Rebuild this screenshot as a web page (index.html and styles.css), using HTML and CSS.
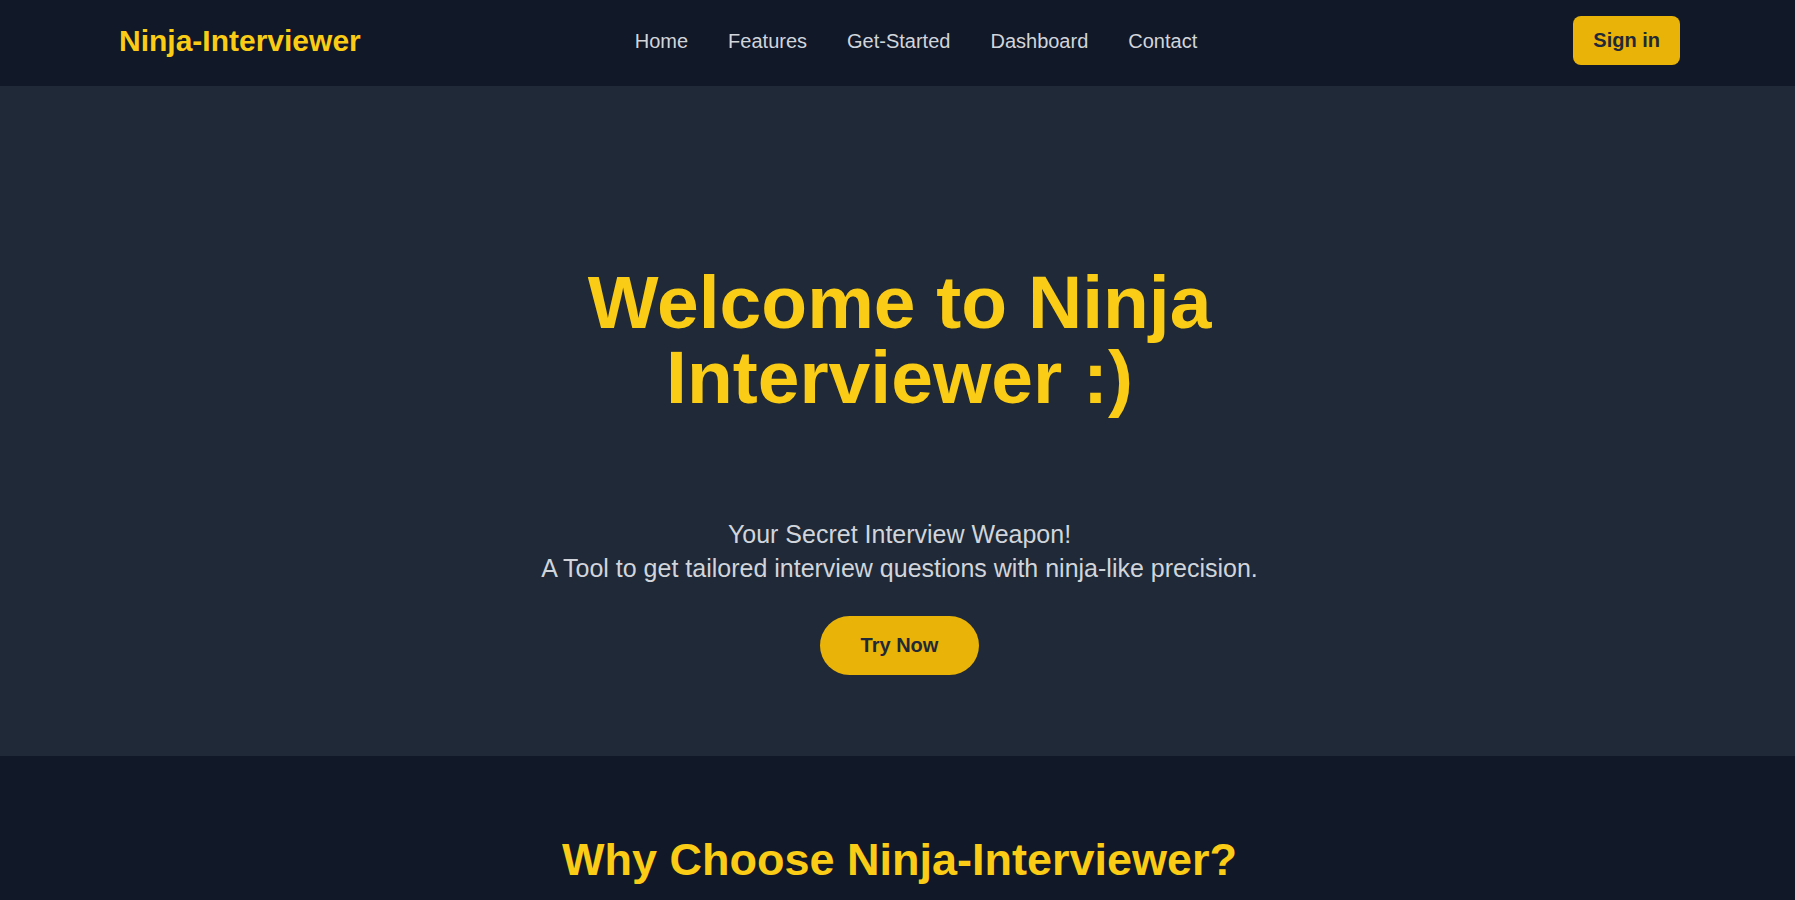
FILE: index.html
```html
<!DOCTYPE html>
<html lang="en">
<head>
<meta charset="utf-8">
<title>Ninja-Interviewer</title>
<link rel="stylesheet" href="styles.css">
</head>
<body>
<header class="site-header">
  <div class="logo">Ninja-Interviewer</div>
  <nav class="nav">
    <a href="#" class="nav-link">Home</a>
    <a href="#" class="nav-link">Features</a>
    <a href="#" class="nav-link">Get-Started</a>
    <a href="#" class="nav-link">Dashboard</a>
    <a href="#" class="nav-link">Contact</a>
  </nav>
  <button class="signin">Sign in</button>
</header>

<section class="hero">
  <h1 class="hero-title">Welcome to Ninja Interviewer :)</h1>
  <p class="hero-sub">Your Secret Interview Weapon!<br>A Tool to get tailored interview questions with ninja-like precision.</p>
  <button class="try-now">Try Now</button>
</section>

<section class="why">
  <h2 class="why-title">Why Choose Ninja-Interviewer?</h2>
</section>
</body>
</html>
```

FILE: styles.css
```css
* { box-sizing: border-box; }

html, body {
  margin: 0;
  padding: 0;
  background: #111827;
  font-family: "Liberation Sans", Arial, sans-serif;
}

.site-header {
  display: flex;
  align-items: center;
  height: 86px;
  padding: 0 115px 5px 119px;
  background: #111827;
}

.logo {
  font-size: 30px;
  line-height: 36px;
  font-weight: 700;
  color: #facc15;
}

.nav {
  display: flex;
  gap: 40px;
  margin-left: 274px;
}

.nav-link {
  font-size: 20px;
  line-height: 28px;
  color: #d1d5db;
  text-decoration: none;
}

.signin {
  margin-left: auto;
  border: none;
  background: #eab308;
  color: #1f2937;
  font-family: inherit;
  font-size: 20px;
  line-height: 29px;
  font-weight: 700;
  padding: 10px 20px;
  border-radius: 8px;
}

.hero {
  background: #1f2937;
  height: 670px;
  padding: 179px 0 0 4px;
  display: flex;
  flex-direction: column;
  align-items: center;
  text-align: center;
}

.hero-title {
  margin: 0;
  max-width: 900px;
  font-size: 75px;
  line-height: 75px;
  font-weight: 700;
  color: #facc15;
}

.hero-sub {
  margin: 102px 0 0;
  font-size: 25px;
  line-height: 34px;
  color: #d1d5db;
}

.try-now {
  margin-top: 31px;
  border: none;
  background: #eab308;
  color: #1f2937;
  font-family: inherit;
  font-size: 20px;
  line-height: 28px;
  font-weight: 700;
  padding: 15px 41px 16px;
  border-radius: 9999px;
}

.why {
  background: #111827;
  padding: 77px 0 0 4px;
  text-align: center;
}

.why-title {
  margin: 0;
  font-size: 45px;
  line-height: 54px;
  font-weight: 700;
  color: #facc15;
}
```
